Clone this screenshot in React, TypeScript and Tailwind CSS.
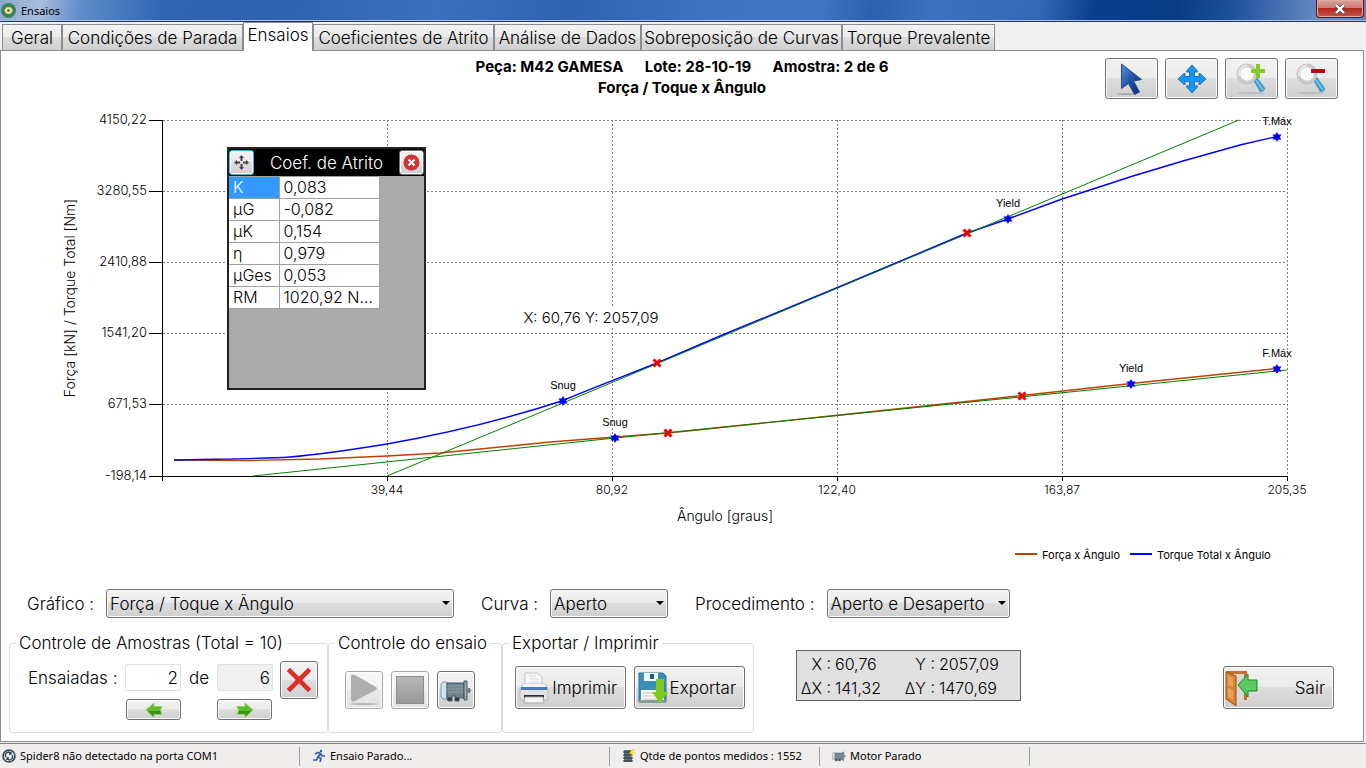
import type { ReactNode } from "react";

const tabs = [
    { label: "Geral", width: "w-[60px]" },
    { label: "Condições de Parada", width: "w-[181px]" },
    { label: "Ensaios", width: "w-[70px]" },
    { label: "Coeficientes de Atrito", width: "w-[181px]" },
    { label: "Análise de Dados", width: "w-[147px]" },
    { label: "Sobreposição de Curvas", width: "w-[201px]" },
    { label: "Torque Prevalente", width: "w-[153px]" },
];

const coefficients = [
    ["K", "0,083"],
    ["µG", "-0,082"],
    ["µK", "0,154"],
    ["η", "0,979"],
    ["µGes", "0,053"],
    ["RM", "1020,92 N..."],
];

const yTicks = [
    { y: 10, label: "4150,22" },
    { y: 81, label: "3280,55" },
    { y: 152, label: "2410,88" },
    { y: 223, label: "1541,20" },
    { y: 294, label: "671,53" },
    { y: 366, label: "-198,14" },
];

const xTicks = [
    { x: 387, label: "39,44" },
    { x: 612, label: "80,92" },
    { x: 837, label: "122,40" },
    { x: 1062, label: "163,87" },
    { x: 1287, label: "205,35" },
];

const stars = [
    { x: 563, y: 291, label: "Snug" },
    { x: 1008, y: 109, label: "Yield" },
    { x: 1277, y: 27, label: "T.Máx" },
    { x: 615, y: 328, label: "Snug" },
    { x: 1131, y: 274, label: "Yield" },
    { x: 1277, y: 259, label: "F.Máx" },
];

const crosses = [
    [657, 253],
    [967, 123],
    [668, 323],
    [1022, 286],
];

const face =
    "border border-[#707070] rounded-[3px] bg-[linear-gradient(#f2f2f2,#ebebeb_48%,#dddddd_50%,#cfcfcf)] shadow-[inset_0_0_0_1px_#fbfbfb]";

function Button({ label, className, children }: { label?: string; className: string; children: ReactNode }) {
    return (
        <button type="button" aria-label={label} className={`flex items-center shrink-0 ${face} ${className}`}>
            {children}
        </button>
    );
}

function Chart() {
    return (
        <svg viewBox="1 0 1362 466" className="block w-full" role="img" aria-label="Força / Toque x Ângulo">
            <g stroke="#808080" strokeDasharray="2 2" shapeRendering="crispEdges">
                {yTicks.slice(0, 5).map((t) => (
                    <line key={t.y} x1="163" x2="1287" y1={t.y + 0.5} y2={t.y + 0.5} />
                ))}
                {xTicks.map((t) => (
                    <line key={t.x} x1={t.x + 0.5} x2={t.x + 0.5} y1="10" y2="366" />
                ))}
            </g>
            <g stroke="#000" shapeRendering="crispEdges">
                <line x1="162.5" x2="162.5" y1="10" y2="371" />
                <line x1="149" x2="1288" y1="366.5" y2="366.5" />
                {yTicks.map((t) => (
                    <line key={t.y} x1="149" x2="162" y1={t.y + 0.5} y2={t.y + 0.5} />
                ))}
                {xTicks.map((t) => (
                    <line key={t.x} x1={t.x + 0.5} x2={t.x + 0.5} y1="366" y2="371" />
                ))}
            </g>

            {/* Measured curves */}
            <g fill="none" strokeWidth="1.4">
                <path
                    stroke="#c04000"
                    d="M174 350 L250 350.5 L320 349 L387 346 L440 343 L480 339 L550 332 L615 327 L668 323 L840 305 L1022 285.5 L1131 273.5 L1277 258.5"
                />
                <path
                    stroke="#0000ff"
                    d="M174 350 C210 349 260 349 290 347 C325 344 350 340 387 334 C450 323 510 308 563 290.5 C600 275 630 264 657 253 L720 226 L840 176.5 L967 123 L1008 109 L1062 89 L1090 80 L1133 66 L1183 51 L1240 35 L1277 26.5"
                />
            </g>

            {/* Reference lines */}
            <g stroke="#008000" strokeWidth="1">
                <line x1="387" y1="366" x2="563" y2="293" />
                <line x1="563" y1="293" x2="1239" y2="10" />
                <line x1="253" y1="366" x2="615" y2="328" />
                <line x1="615" y1="328" x2="1287" y2="260" />
            </g>

            {stars.map((s) => (
                <g key={`${s.x}-${s.y}`}>
                    <path
                        transform={`translate(${s.x} ${s.y})`}
                        fill="#0000ff"
                        d="M0 -5 L1.4 -2.4 L4.6 -2.6 L2.8 0 L4.6 2.6 L1.4 2.4 L0 5 L-1.4 2.4 L-4.6 2.6 L-2.8 0 L-4.6 -2.6 L-1.4 -2.4 Z"
                    />
                    <text x={s.x} y={s.y - 12} textAnchor="middle" className="text-[11px] font-normal font-['Liberation_Sans',sans-serif]">
                        {s.label}
                    </text>
                </g>
            ))}
            {crosses.map(([x, y]) => (
                <path
                    key={x}
                    transform={`translate(${x} ${y})`}
                    stroke="#f00000"
                    strokeWidth="3"
                    d="M-3.5 -3.5 L3.5 3.5 M3.5 -3.5 L-3.5 3.5"
                />
            ))}

            <g className="text-[13px]" textAnchor="end">
                {yTicks.map((t) => (
                    <text key={t.label} x="147" y={t.y + 4}>
                        {t.label}
                    </text>
                ))}
            </g>
            <g className="text-[12px]" textAnchor="middle">
                {xTicks.map((t) => (
                    <text key={t.label} x={t.x} y="384">
                        {t.label}
                    </text>
                ))}
            </g>
            <g className="text-[14px]" textAnchor="middle">
                <text transform="translate(75 188) rotate(-90)">Força [kN] / Torque Total [Nm]</text>
                <text x="725" y="411">Ângulo [graus]</text>
            </g>
            <rect x="520" y="197" width="142" height="20" fill="#fff" />
            <text x="591" y="213" textAnchor="middle" className="text-[15px]">
                X: 60,76 Y: 2057,09
            </text>
            <path stroke="#c04000" strokeWidth="2" d="M1015 444 H1037" />
            <path stroke="#0000ff" strokeWidth="2" d="M1130 444 H1152" />
            <g className="text-[11px] font-normal">
                <text x="1042" y="449">Força x Ângulo</text>
                <text x="1157" y="449">Torque Total x Ângulo</text>
            </g>
        </svg>
    );
}

function CoefWindow() {
    return (
        <div className="absolute left-[226px] top-[96px] w-[199px] h-[243px] border-2 border-[#222] bg-[#ababab]">
            <div className="h-[27px] bg-black flex items-center justify-between">
                <Button label="Mover" className="w-[25px] h-[25px] justify-center border-[#2cb7e8]!">
                    <svg width="17" height="17" viewBox="0 0 17 17" fill="#444" stroke="#444">
                        <path d="M8.5 1 L11 4 H6 Z M8.5 16 L11 13 H6 Z M1 8.5 L4 6 V11 Z M16 8.5 L13 6 V11 Z" stroke="none" />
                        <path d="M8.5 3 V7 M8.5 10 V14 M3 8.5 H7 M10 8.5 H14" strokeWidth="2" />
                    </svg>
                </Button>
                <span className="text-white">Coef. de Atrito</span>
                <Button label="Fechar painel" className="w-[25px] h-[25px] justify-center">
                    <svg width="17" height="17" viewBox="0 0 17 17">
                        <circle cx="8.5" cy="8.5" r="8" fill="#cf3339" />
                        <path d="M5.5 5.5 L11.5 11.5 M11.5 5.5 L5.5 11.5" stroke="#fff" strokeWidth="2" />
                    </svg>
                </Button>
            </div>
            <table className="w-[151px] table-fixed border-collapse text-[16px] leading-[21px]">
                <tbody>
                    {coefficients.map(([name, value], index) => (
                        <tr key={name} className="h-[22px] bg-white">
                            <th
                                scope="row"
                                className={`w-[50px] border border-[#a0a0a0] border-l-0 p-0 pl-1 text-left font-light ${index === 0 ? "bg-[#3399ff] text-white" : ""}`}
                            >
                                {name}
                            </th>
                            <td className="border border-[#a0a0a0] p-0 pl-1 whitespace-nowrap">{value}</td>
                        </tr>
                    ))}
                </tbody>
            </table>
        </div>
    );
}

function Magnifier({ children }: { children: ReactNode }) {
    return (
        <svg width="32" height="34" viewBox="0 0 32 34">
            <ellipse cx="15" cy="31" rx="14" ry="1.2" fill="#bcbcbc" />
            <path d="M17 18 L21 15 L29 26 Q29 30 24 30 Z" fill="#3f9cc4" />
            <path d="M20 18 L27 28" stroke="#7cc6e2" strokeWidth="1.5" />
            <circle cx="11" cy="12" r="8.5" fill="#fafafa" stroke="#cbcbcb" strokeWidth="3.5" />
            <circle cx="11" cy="12" r="10" fill="none" stroke="#b5b5b5" strokeWidth="0.6" />
            <path d="M3 14 A8.5 8.5 0 0 1 11 3.5" fill="none" stroke="#e9e9e9" strokeWidth="2" />
            {children}
        </svg>
    );
}

function Toolbar() {
    return (
        <div className="absolute right-[25px] top-[7px] flex gap-[7px]">
            <Button label="Selecionar" className="w-[53px] h-[41px] justify-center">
                <svg width="32" height="34" viewBox="0 0 32 34">
                    <defs>
                        <linearGradient id="cursor" x1="0" y1="0" x2="1" y2="1">
                            <stop offset="0" stopColor="#5f93d8" />
                            <stop offset="0.5" stopColor="#2450a4" />
                            <stop offset="1" stopColor="#0c2a6a" />
                        </linearGradient>
                    </defs>
                    <ellipse cx="10" cy="32" rx="9" ry="1" fill="#aaa" />
                    <path d="M5.5 2 L25.5 17.5 L17.5 19 L23.5 30 L18.5 32.5 L12.5 21.5 L5.5 26.5 Z" fill="url(#cursor)" stroke="#24478f" />
                </svg>
            </Button>
            <Button label="Mover gráfico" className="w-[53px] h-[41px] justify-center">
                <svg width="30" height="30" viewBox="0 0 30 30">
                    <path
                        d="M15 1 L20.5 7 V8 H17.5 V12.5 H22 V9.5 H23 L29 15 L23 20.5 H22 V17.5 H17.5 V22 H20.5 V23 L15 29 L9.5 23 V22 H12.5 V17.5 H8 V20.5 H7 L1 15 L7 9.5 H8 V12.5 H12.5 V8 H9.5 V7 Z"
                        fill="#0d99ff"
                        stroke="#3a6f96"
                        strokeLinejoin="round"
                    />
                </svg>
            </Button>
            <Button label="Ampliar" className="w-[53px] h-[41px] justify-center">
                <Magnifier>
                    <path d="M22 2 V16 M15 9 H29" stroke="#82cc1e" strokeWidth="4" />
                </Magnifier>
            </Button>
            <Button label="Reduzir" className="w-[53px] h-[41px] justify-center">
                <Magnifier>
                    <path d="M15 9 H29" stroke="#b01018" strokeWidth="4" />
                </Magnifier>
            </Button>
        </div>
    );
}

function Select({ id, label, value, className }: { id: string; label: string; value: string; className: string }) {
    return (
        <div className="flex items-center">
            <label htmlFor={id} className="whitespace-nowrap mr-3">
                {label}
            </label>
            <div className="relative">
                <select id={id} className={`appearance-none h-[29px] pl-[3px] pr-4 ${face} ${className}`}>
                    <option>{value}</option>
                </select>
                <span className="absolute right-1 top-3 border-x-4 border-x-transparent border-t-4 border-t-black pointer-events-none"></span>
            </div>
        </div>
    );
}

function Group({ title, className, children }: { title: string; className: string; children: ReactNode }) {
    return (
        <fieldset className={`h-[100px] shrink-0 border border-[#d5dfe5] rounded-[3px] min-w-0 ${className}`}>
            <legend className="ml-[6px] px-[3px] leading-5 whitespace-nowrap">{title}</legend>
            {children}
        </fieldset>
    );
}

function GreenArrow({ flip }: { flip?: boolean }) {
    return (
        <svg width="18" height="16" viewBox="0 0 18 16" className={flip ? "-scale-x-100" : ""}>
            <path d="M1 8 L9 1 V4.5 H17 L15.5 8 L17 12.5 H9 V15.5 Z" fill="#62bd2c" stroke="#8fcf6c" />
            <path d="M3 9 H15 L16 12 H8.5 V14.5 Z" fill="#3b9410" />
        </svg>
    );
}

function Motor({ size }: { size: number }) {
    return (
        <svg width={size} height={size} viewBox="0 0 32 32">
            <path d="M1 10 L3 8 H7 V25 H3 L1 23 Z" fill="#cfe3ed" stroke="#7e98a5" />
            <path d="M7 9 H24 V24 H19 V27 H15 V22 H12 V27 H8 L7 25 Z" fill="#71858f" stroke="#44545c" />
            <path d="M7 12 H24 M7 15 H24 M7 18 H24" stroke="#889ca5" />
            <path d="M8 25 H12 M15 25 H19" stroke="#2f3a40" strokeWidth="3" />
            <path d="M24 7 H27 V26 H24 Z" fill="#9aabb3" stroke="#44545c" />
            <path d="M27 16.5 H31 M29 14 V19" stroke="#6b7b83" strokeWidth="2" />
        </svg>
    );
}

function SampleControl() {
    return (
        <Group title="Controle de Amostras (Total = 10)" className="w-[319px]">
            <div className="flex pl-[18px] pt-[11px]">
                <label htmlFor="amostra" className="w-[97px] pt-1">
                    Ensaiadas :
                </label>
                <div className="flex flex-col gap-2">
                    <input id="amostra" defaultValue="2" className="w-14 h-[27px] border border-[#dbe2e8] rounded-[2px] bg-white pr-[2px] text-right" />
                    <Button label="Amostra anterior" className="w-[55px] h-[21px] ml-px justify-center">
                        <GreenArrow />
                    </Button>
                </div>
                <label htmlFor="total" className="w-9 pt-1 text-center">
                    de
                </label>
                <div className="flex flex-col gap-2">
                    <input id="total" readOnly defaultValue="6" className="w-14 h-[27px] border border-[#dbe2e8] rounded-[2px] bg-[#f0f0f0] pr-[2px] text-right" />
                    <Button label="Próxima amostra" className="w-[55px] h-[21px] justify-center">
                        <GreenArrow flip />
                    </Button>
                </div>
                <Button label="Excluir amostra" className="w-[38px] h-[38px] ml-[7px] -mt-[3px] justify-center">
                    <svg width="26" height="26" viewBox="0 0 26 26">
                        <path
                            d="M4 1 L13 10 L22 1 L25 4 L16 13 L25 22 L22 25 L13 16 L4 25 L1 22 L10 13 L1 4 Z"
                            fill="#e32b2b"
                            stroke="#d06060"
                        />
                    </svg>
                </Button>
            </div>
        </Group>
    );
}

function TestControl() {
    return (
        <Group title="Controle do ensaio" className="w-[174px]">
            <div className="flex gap-2 pl-4 pt-[18px]">
                <Button label="Iniciar" className="w-[38px] h-[38px] justify-center opacity-60">
                    <svg width="32" height="32" viewBox="0 0 32 32">
                        <ellipse cx="16" cy="30" rx="14" ry="1" fill="#888" />
                        <path d="M3 1 Q4 0 7 1 L28 13 Q30 14.5 28 16 L7 27 Q3 29 3 26 Z" fill="#7a7a7a" />
                    </svg>
                </Button>
                <Button label="Parar" className="w-[38px] h-[38px] justify-center opacity-60">
                    <span className="w-7 h-7 border border-[#444] bg-linear-to-b from-[#888] to-[#555]"></span>
                </Button>
                <Button label="Motor" className="w-[38px] h-[38px] justify-center">
                    <Motor size={32} />
                </Button>
            </div>
        </Group>
    );
}

function ExportPanel() {
    return (
        <Group title="Exportar / Imprimir" className="w-[252px]">
            <div className="flex gap-2 pl-3 pt-[13px]">
                <Button className="w-[111px] h-[43px] pl-[3px] pr-[8px] justify-between">
                    <svg width="30" height="34" viewBox="0 0 30 34">
                        <path d="M6 2 H18 L23 6 V16 H6 Z" fill="#f8f8f8" stroke="#c4c4c4" />
                        <path d="M10 5 H17 M10 8 H20 M10 11 H20" stroke="#d4d4d4" />
                        <path d="M4 13 H26 L29 18 V29 H1 V18 Z" fill="#dfe2e7" stroke="#b4b8be" />
                        <path d="M4 13 H26 V16 H4 Z" fill="#f4f4f4" />
                        <path d="M2 16 H28 V19 H2 Z" fill="#4b78b8" />
                        <path d="M5 24 H25 V27 H5 Z" fill="#2b2b2b" />
                        <path d="M6 26 H24 L25 32 H5 Z" fill="#f4f4f4" stroke="#a9a9a9" />
                    </svg>
                    Imprimir
                </Button>
                <Button className="w-[111px] h-[43px] pl-[3px] pr-2 justify-between">
                    <svg width="31" height="34" viewBox="0 0 31 34">
                        <path d="M1 2 H25 L28 5 V31 H1 Z" fill="#3a8eb8" stroke="#28759b" />
                        <path d="M6 2 H20 V10 H6 Z" fill="#f3f8fa" />
                        <path d="M12 3 H16 V8 H12 Z" fill="#1c5f80" />
                        <path d="M3 19 H26 V29 H3 Z" fill="#fafafa" />
                        <path d="M5 22 H18 M5 25 H17 M5 28 H20" stroke="#b7c3c9" />
                        <path d="M1 30 H28" stroke="#e8b450" />
                        <path d="M18 8 H26 V21 H30 L22 32 L14 21 H18 Z" fill="#7ccb1e" />
                    </svg>
                    Exportar
                </Button>
            </div>
        </Group>
    );
}

function ExitIcon() {
    return (
        <svg width="34" height="38" viewBox="0 0 34 38">
            <path d="M1 2 H22 V31 H19 V5 H4 V31 H1 Z" fill="#c56f24" />
            <path d="M4 5 H19 V30 L10 36 Z" fill="#d7d7d7" />
            <path d="M1 3 L11 7 V37 L1 30 Z" fill="#d98232" stroke="#9a5116" />
            <path d="M3 7 L8 9 V18 L3 16 Z M3 19 L8 21 V31 L3 28 Z" fill="#e9a05a" />
            <path d="M13 16 L23 5 V11 H32 V22 H23 V28 Z" fill="#5cc862" stroke="#158a27" />
        </svg>
    );
}

function StatusBar() {
    return (
        <footer className="h-[25px] shrink-0 flex items-center bg-[#f0eded] border-t border-[#808080] text-[11px] font-['Noto_Sans',sans-serif] font-normal whitespace-nowrap">
            <div className="w-[300px] h-[19px] flex items-center gap-1 pl-[2px] border-r border-[#a0a0a0]">
                <svg width="14" height="14" viewBox="0 0 14 14" fill="none" stroke="#2d4558">
                    <circle cx="7" cy="7" r="6" strokeWidth="1.6" />
                    <path d="M4 8 A3 3 0 0 1 9 4.5 M10 6 A3 3 0 0 1 5 9.5 M9 3 V5 H7 M5 11 V9 H7" strokeWidth="1.3" />
                </svg>
                Spider8 não detectado na porta COM1
            </div>
            <div className="w-[310px] h-[19px] flex items-center gap-1 pl-3 border-r border-[#a0a0a0]">
                <svg width="14" height="14" viewBox="0 0 14 14" fill="none" stroke="#2c5fb0" strokeWidth="1.7">
                    <circle cx="9" cy="2" r="1.2" fill="#2c5fb0" stroke="none" />
                    <path d="M3 5 L6 3.5 L8.5 4.5 L6 8 L9 9.5 L8 13 M8.5 4.5 L10 7 H13 M6 8 L4.5 11 H1" />
                </svg>
                Ensaio Parado...
            </div>
            <div className="w-[210px] h-[19px] flex items-center gap-1 pl-3 border-r border-[#a0a0a0]">
                <svg width="14" height="14" viewBox="0 0 14 14">
                    <path d="M2 1 H10 V13 H2 Z" fill="#65727c" />
                    <path d="M1 3 H11 M1 6 H11 M1 9 H11 M1 12 H11" stroke="#26313a" />
                    <path d="M10 0 L7 5 H10 L8 9 L13 3 H11 L13 0 Z" fill="#f5e32b" />
                </svg>
                Qtde de pontos medidos : 1552
            </div>
            <div className="w-[210px] h-[19px] flex items-center gap-1 pl-3 border-r border-[#a0a0a0]">
                <Motor size={14} />
                Motor Parado
            </div>
        </footer>
    );
}

export default function App() {
    return (
        <div className="min-h-screen flex flex-col bg-[#f0f0f0] text-black text-[17px] leading-5 font-light font-['Inter',sans-serif]">
            {/* Title bar */}
            <header className="h-[22px] shrink-0 flex items-start justify-between border-b border-[#1f3a63] bg-[linear-gradient(100deg,#8fa9cc_0%,#a9bedd_3%,#5f8cc9_6%,#2f66b4_12%,#2c62b0_20%,#3a70bc_32%,#2f62b0_42%,#4172bf_52%,#4273c0_60%,#2c5fae_64%,#3f70bd_68%,#3468b6_76%,#08408e_80%,#0a3a85_86%,#1d4f9c_90%,#6e8fc6_97%,#5a82c2_100%)] shadow-[inset_0_-1px_0_#a9bfe0]">
                <div className="h-[21px] flex items-center gap-[5px] pl-px text-[11px] font-normal font-['Noto_Sans',sans-serif]">
                    <svg width="15" height="15" viewBox="0 0 15 15">
                        <circle cx="7.5" cy="7.5" r="7.5" fill="#3b8068" />
                        <path d="M5.5 4.5 H9.5 L11.5 7.5 L9.5 10.5 H5.5 L3.5 7.5 Z" fill="#f2efc0" stroke="#e6c82a" />
                        <circle cx="7.5" cy="7.5" r="1.5" fill="#3b8068" />
                    </svg>
                    Ensaios
                </div>
                <button
                    type="button"
                    aria-label="Fechar"
                    className="w-12 h-[18px] mr-[2px] flex items-center justify-center rounded-b-[4px] border border-t-0 border-[#4c1a1c] bg-[linear-gradient(#dba39b,#cf7b70_45%,#b3281c_50%,#c2574c)] shadow-[inset_0_0_0_1px_#e0a9a2]"
                >
                    <svg width="12" height="10" viewBox="0 0 12 10">
                        <path d="M2 1 L10 9 M10 1 L2 9" stroke="#4b4b55" strokeWidth="4" />
                        <path d="M2 1 L10 9 M10 1 L2 9" stroke="#fff" strokeWidth="2.4" />
                    </svg>
                </button>
            </header>

            {/* Tabs */}
            <div role="tablist" className="relative z-10 h-[29px] shrink-0 flex items-end pl-[2px]">
                {tabs.map((tab) =>
                    tab.label === "Ensaios" ? (
                        <button key={tab.label} type="button" role="tab" aria-selected="true" className={`h-[29px] pb-1 bg-white border border-b-0 border-[#898c95] whitespace-nowrap ${tab.width}`}>
                            {tab.label}
                        </button>
                    ) : (
                        <button
                            key={tab.label}
                            type="button"
                            role="tab"
                            aria-selected="false"
                            className={`h-[27px] border border-[#898c95] bg-[linear-gradient(#f2f2f2,#ebebeb_48%,#dddddd_50%,#cfcfcf)] whitespace-nowrap ${tab.width}`}
                        >
                            {tab.label}
                        </button>
                    ),
                )}
            </div>

            <main className="grow flex flex-col bg-white border border-[#898c95] -mt-px mb-px mr-[2px]">
                <section className="relative">
                    <div className="h-[59px] pt-[5px] text-center text-[15px] leading-[21px] font-bold whitespace-pre">
                        <p>{"Peça: M42 GAMESA      Lote: 28-10-19      Amostra: 2 de 6"}</p>
                        <p>Força / Toque x Ângulo</p>
                    </div>
                    <Chart />
                    <CoefWindow />
                    <Toolbar />
                </section>

                <div className="flex gap-[27px] pl-[26px] pt-[13px]">
                    <Select id="grafico" label="Gráfico :" value="Força / Toque x Ângulo" className="w-[348px]" />
                    <Select id="curva" label="Curva :" value="Aperto" className="w-[118px]" />
                    <Select id="procedimento" label="Procedimento :" value="Aperto e Desaperto" className="w-[183px]" />
                </div>

                <div className="flex items-start pl-2 pt-[15px]">
                    <SampleControl />
                    <TestControl />
                    <ExportPanel />
                    <div className="ml-[42px] mt-[17px] w-[225px] h-[51px] shrink-0 grid grid-cols-[34px_62px_34px_1fr] content-center gap-x-1 border border-[#646464] bg-[#e0e0e0] text-[16px] leading-6 whitespace-nowrap">
                        <span className="text-right">X :</span>
                        <span>60,76</span>
                        <span className="text-right">Y :</span>
                        <span>2057,09</span>
                        <span className="text-right">ΔX :</span>
                        <span>141,32</span>
                        <span className="text-right">ΔY :</span>
                        <span>1470,69</span>
                    </div>
                    <Button className="w-[111px] h-[43px] ml-auto mr-[29px] mt-[33px] pl-px pr-2 justify-between">
                        <ExitIcon />
                        Sair
                    </Button>
                </div>
            </main>
            <StatusBar />
        </div>
    );
}
